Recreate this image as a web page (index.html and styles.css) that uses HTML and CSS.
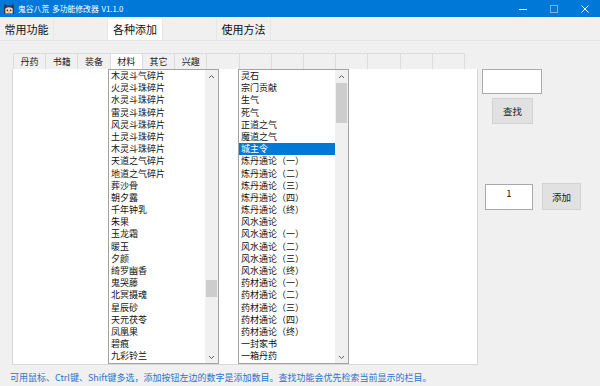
FILE: index.html
```html
<!DOCTYPE html>
<html lang="zh-CN">
<head>
<meta charset="utf-8">
<title>鬼谷八荒 多功能修改器</title>
<link rel="stylesheet" href="styles.css">
</head>
<body>
<div class="window">
  <header class="titlebar">
    <svg class="app-icon" width="12" height="12" viewBox="0 0 12 12">
      <path d="M1 5 L1.5 0.8 L4 2.5 L8 2.5 L10.5 0.8 L11 5 L11 11 L1 11 Z" fill="#3a3340"/>
      <path d="M2.3 5.5 Q6 3.2 9.7 5.5 L9.7 10.5 L2.3 10.5 Z" fill="#f6d6bd"/>
      <circle cx="4.4" cy="7.4" r="0.8" fill="#2a2a2a"/>
      <circle cx="7.6" cy="7.4" r="0.8" fill="#2a2a2a"/>
      <path d="M5.3 9.2 Q6 9.8 6.7 9.2" stroke="#c06060" stroke-width="0.6" fill="none"/>
    </svg>
    <span class="title">鬼谷八荒 多功能修改器 V1.1.0</span>
    <div class="controls">
      <span class="ctl"><svg width="10" height="10" viewBox="0 0 10 10"><path d="M1 5.5 H9" stroke="#fff" stroke-width="1"/></svg></span>
      <span class="ctl dim"><svg width="10" height="10" viewBox="0 0 10 10"><rect x="1.5" y="1.5" width="7" height="7" stroke="#fff" stroke-width="1" fill="none"/></svg></span>
      <span class="ctl"><svg width="10" height="10" viewBox="0 0 10 10"><path d="M1.5 1.5 L8.5 8.5 M8.5 1.5 L1.5 8.5" stroke="#fff" stroke-width="1"/></svg></span>
    </div>
  </header>

  <nav class="maintabs">
    <div class="mtab">常用功能</div>
    <div class="mtab"></div>
    <div class="mtab active">各种添加</div>
    <div class="mtab"></div>
    <div class="mtab">使用方法</div>
  </nav>

  <main class="body">
    <section class="left">
      <div class="subtabs">
        <div class="stab">丹药</div>
        <div class="stab">书籍</div>
        <div class="stab">装备</div>
        <div class="stab active">材料</div>
        <div class="stab">其它</div>
        <div class="stab">兴趣</div>
        <div class="stab"></div>
        <div class="stab"></div>
        <div class="stab"></div>
        <div class="stab"></div>
        <div class="stab"></div>
        <div class="stab"></div>
        <div class="stab"></div>
        <div class="stab"></div>
      </div>
      <div class="pane">
        <div class="listbox">
          <ul class="items">
            <li>木灵斗气碎片</li>
            <li>火灵斗珠碎片</li>
            <li>水灵斗珠碎片</li>
            <li>雷灵斗珠碎片</li>
            <li>风灵斗珠碎片</li>
            <li>土灵斗珠碎片</li>
            <li>木灵斗珠碎片</li>
            <li>天道之气碎片</li>
            <li>地道之气碎片</li>
            <li>葬沙骨</li>
            <li>朝夕露</li>
            <li>千年钟乳</li>
            <li>朱果</li>
            <li>玉龙霜</li>
            <li>暖玉</li>
            <li>夕颜</li>
            <li>绮罗幽香</li>
            <li>鬼哭藤</li>
            <li>北冥摄魂</li>
            <li>星辰砂</li>
            <li>天元茯苓</li>
            <li>凤凰果</li>
            <li>碧痕</li>
            <li>九彩铃兰</li>
          </ul>
          <div class="scrollbar">
            <span class="arrow"><svg width="7" height="5" viewBox="0 0 7 5"><path d="M1 4 L3.5 1.5 L6 4" stroke="#606060" stroke-width="1" fill="none"/></svg></span>
            <div class="track"><div class="thumb" style="margin-top:198px;height:17px"></div></div>
            <span class="arrow"><svg width="7" height="5" viewBox="0 0 7 5"><path d="M1 1 L3.5 3.5 L6 1" stroke="#606060" stroke-width="1" fill="none"/></svg></span>
          </div>
        </div>
        <div class="listbox">
          <ul class="items">
            <li>灵石</li>
            <li>宗门贡献</li>
            <li>生气</li>
            <li>死气</li>
            <li>正道之气</li>
            <li>魔道之气</li>
            <li class="selected">城主令</li>
            <li>炼丹通论（一）</li>
            <li>炼丹通论（二）</li>
            <li>炼丹通论（三）</li>
            <li>炼丹通论（四）</li>
            <li>炼丹通论（终）</li>
            <li>风水通论</li>
            <li>风水通论（一）</li>
            <li>风水通论（二）</li>
            <li>风水通论（三）</li>
            <li>风水通论（终）</li>
            <li>药材通论（一）</li>
            <li>药材通论（二）</li>
            <li>药材通论（三）</li>
            <li>药材通论（四）</li>
            <li>药材通论（终）</li>
            <li>一封家书</li>
            <li>一箱丹药</li>
          </ul>
          <div class="scrollbar">
            <span class="arrow"><svg width="7" height="5" viewBox="0 0 7 5"><path d="M1 4 L3.5 1.5 L6 4" stroke="#606060" stroke-width="1" fill="none"/></svg></span>
            <div class="track"><div class="thumb" style="margin-top:1px;height:40px"></div></div>
            <span class="arrow"><svg width="7" height="5" viewBox="0 0 7 5"><path d="M1 1 L3.5 3.5 L6 1" stroke="#606060" stroke-width="1" fill="none"/></svg></span>
          </div>
        </div>
      </div>
    </section>

    <aside class="side">
      <div class="search-input"></div>
      <button class="btn find-btn">查找</button>
      <div class="add-row">
        <div class="num-input">1</div>
        <button class="btn add-btn">添加</button>
      </div>
    </aside>
  </main>

  <p class="hint">可用鼠标、Ctrl键、Shift键多选，添加按钮左边的数字是添加数目。查找功能会优先检索当前显示的栏目。</p>
</div>
</body>
</html>
```

FILE: styles.css
```css
* { box-sizing: border-box; }

html, body {
  margin: 0;
  padding: 0;
}

body {
  width: 600px;
  height: 386px;
  overflow: hidden;
  background: #f0f0f0;
  font-family: "Noto Sans CJK SC", "Noto Sans", sans-serif;
  color: #111;
}

.window {
  width: 600px;
  height: 386px;
  display: flex;
  flex-direction: column;
  background: #f0f0f0;
}

/* title bar */
.titlebar {
  height: 17px;
  background: #0078d7;
  display: flex;
  align-items: center;
  color: #fff;
  flex: none;
}

.app-icon {
  margin-left: 3px;
  flex: none;
}

.title {
  margin-left: 3px;
  font-size: 7.8px;
  line-height: 17px;
  white-space: nowrap;
  word-spacing: 1px;
}

.controls {
  margin-left: auto;
  display: flex;
  height: 17px;
}

.ctl {
  width: 31px;
  height: 17px;
  display: flex;
  align-items: center;
  justify-content: center;
}

.ctl.dim { opacity: 0.45; }

/* main tabs */
.maintabs {
  margin-top: 2px;
  height: 22px;
  display: flex;
  border-bottom: 1px solid #e4e4e4;
  flex: none;
}

.mtab {
  width: 54px;
  height: 21px;
  border-right: 1px solid #e6e6e6;
  font-size: 11px;
  line-height: 21px;
  text-align: center;
  white-space: nowrap;
  color: #111;
}

.mtab.active {
  background: #fff;
  width: 55px;
}

/* body */
.body {
  margin-top: 12px;
  display: flex;
  flex: none;
}

.left {
  margin-left: 12px;
  width: 466px;
  display: flex;
  flex-direction: column;
}

.subtabs {
  margin-left: 1px;
  width: 452px;
  height: 16px;
  display: grid;
  grid-template-columns: repeat(14, 1fr);
  border-top: 1px solid #dcdcdc;
  border-left: 1px solid #dcdcdc;
}

.stab {
  border-right: 1px solid #dcdcdc;
  font-size: 9px;
  line-height: 15px;
  text-align: center;
  white-space: nowrap;
  color: #222;
}

.stab.active {
  background: #fff;
}

.pane {
  width: 466px;
  height: 296px;
  background: #fff;
  border: 1px solid #d8d8d8;
  border-top: none;
  padding-left: 95px;
  display: flex;
  gap: 19px;
}

.listbox {
  width: 111px;
  height: 295px;
  border: 1px solid #a3a3a3;
  display: flex;
  background: #fff;
}

.items {
  list-style: none;
  margin: 0;
  padding: 0;
  width: 96px;
  overflow: hidden;
}

.items li {
  height: 12.2px;
  line-height: 12.2px;
  font-size: 9px;
  padding-left: 2px;
  white-space: nowrap;
  color: #111;
}

.items li.selected {
  background: #0078d7;
  color: #fff;
}

.scrollbar {
  width: 13px;
  background: #f0f0f0;
  display: flex;
  flex-direction: column;
}

.arrow {
  height: 12px;
  display: flex;
  align-items: center;
  justify-content: center;
  flex: none;
}

.track {
  flex: 1;
  display: flex;
  flex-direction: column;
  align-items: center;
}

.thumb {
  width: 11px;
  background: #cdcdcd;
}

/* side */
.side {
  width: 122px;
  padding-top: 16px;
  display: flex;
  flex-direction: column;
  align-items: flex-start;
}

.search-input {
  margin-left: 4px;
  width: 60px;
  height: 25px;
  background: #fff;
  border: 1px solid #a9a9a9;
}

.btn {
  font-family: "Noto Sans CJK SC", "Noto Sans", sans-serif;
  font-size: 9.5px;
  color: #222;
  background: #e1e1e1;
  border: 1px solid #d2d2d2;
  padding: 0;
  margin: 0;
}

.find-btn {
  margin-top: 4px;
  margin-left: 14px;
  width: 41px;
  height: 26px;
}

.add-row {
  margin-top: 59px;
  display: flex;
  align-items: flex-start;
}

.num-input {
  margin-left: 7px;
  margin-top: 1px;
  width: 48px;
  height: 26px;
  background: #fff;
  border: 1px solid #a9a9a9;
  font-size: 9.5px;
  text-align: center;
  line-height: 16px;
  color: #111;
}

.add-btn {
  margin-left: 9px;
  width: 39px;
  height: 27px;
}

/* hint */
.hint {
  margin: 0;
  padding-top: 6px;
  padding-left: 10px;
  font-size: 9px;
  line-height: 14px;
  color: #2b72c9;
  white-space: nowrap;
}
```
